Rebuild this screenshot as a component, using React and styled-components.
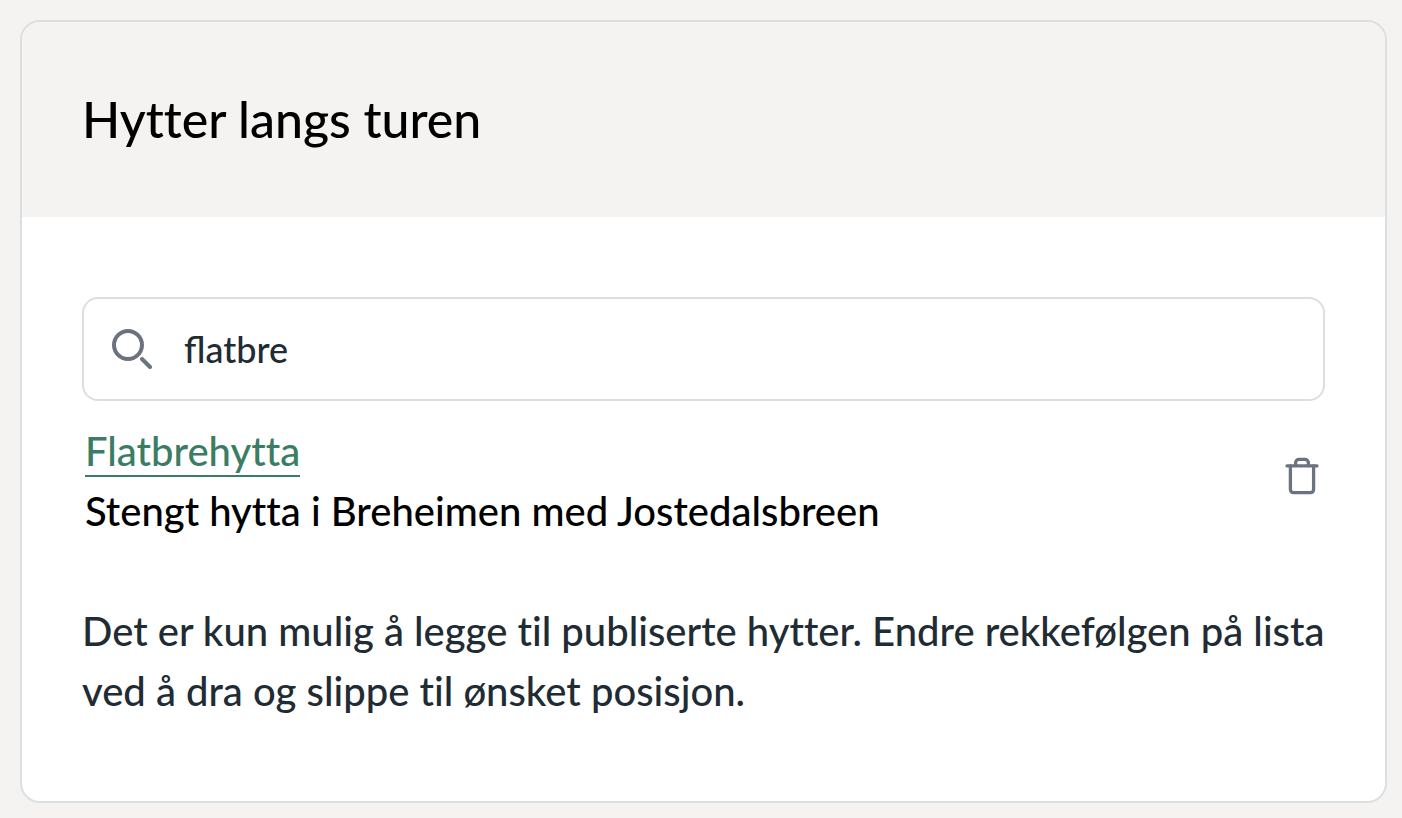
import React, { useState } from "react";
import styled, { createGlobalStyle } from "styled-components";

const GlobalStyle = createGlobalStyle`
  *, *::before, *::after { box-sizing: border-box; }
  body {
    margin: 0;
    background: #f4f3f1;
    font-family: Lato, "Liberation Sans", sans-serif;
    font-size: 40px;
    line-height: 60px;
    font-weight: 500;
    font-variant-ligatures: none;
    color: #000;
  }
`;

const Card = styled.section`
  margin: 20px 15px 15px 20px;
  border: 2px solid #dcdfe1;
  border-radius: 20px;
  background: #fff;
  overflow: hidden;
`;

const CardHeader = styled.header`
  padding: 60px;
  background: #f4f3f1;
`;

const Title = styled.h2`
  margin: 0;
  font-size: 50px;
  line-height: 75px;
  font-weight: 500;
`;

const CardBody = styled.div`
  padding: 80px 60px;
`;

const SearchField = styled.label`
  display: flex;
  align-items: center;
  gap: 32px;
  height: 104px;
  padding: 0 28px;
  border: 2px solid #dedede;
  border-radius: 16px;
  color: #6b7280;
`;

const SearchInput = styled.input`
  flex: 1;
  min-width: 0;
  padding: 0;
  border: 0;
  outline: 0;
  background: transparent;
  font: inherit;
  font-size: 36px;
  line-height: 54px;
  font-variant-ligatures: common-ligatures;
  color: #212b34;
`;

const CabinList = styled.ul`
  margin: 20px 0 60px;
  padding: 0 3px;
  list-style: none;
`;

const CabinItem = styled.li`
  display: flex;
  justify-content: space-between;
  align-items: center;
`;

const CabinText = styled.div`
  min-width: 0;
`;

const CabinLink = styled.a`
  border-bottom: 2px solid #3b7d64;
  color: #3b7d64;
  text-decoration: none;
`;

const CabinDescription = styled.p`
  margin: 0;
`;

const IconButton = styled.button`
  flex: none;
  display: flex;
  padding: 0 0 10px;
  border: 0;
  background: none;
  color: #6b7280;
  cursor: pointer;
`;

const HelpText = styled.p`
  margin: 0;
  color: #212b34;
`;

const Icon = styled.svg`
  flex: none;
  width: 40px;
  height: 40px;
  fill: none;
  stroke: currentColor;
  stroke-linecap: round;
  stroke-linejoin: round;
`;

function SearchIcon() {
  return (
    <Icon viewBox="0 0 40 40" strokeWidth="4" aria-hidden="true">
      <circle cx="16" cy="16" r="14" />
      <path d="M30 30l8 8" />
    </Icon>
  );
}

function TrashIcon() {
  return (
    <Icon viewBox="0 0 40 40" strokeWidth="3.3" aria-hidden="true">
      <path d="M5 9.9h30" />
      <path d="M13.6 9.5V6.8a3.4 3.4 0 0 1 3.4-3.4h6a3.4 3.4 0 0 1 3.4 3.4v2.7" />
      <path d="M8.4 9.9V33.6a3 3 0 0 0 3 3h17.2a3 3 0 0 0 3-3V9.9" />
    </Icon>
  );
}

export default function App() {
  const [query, setQuery] = useState("flatbre");
  return (
    <>
      <GlobalStyle />
      <Card>
        <CardHeader>
          <Title>Hytter langs turen</Title>
        </CardHeader>
        <CardBody>
          <SearchField>
            <SearchIcon />
            <SearchInput
              type="text"
              aria-label="Søk etter hytte"
              value={query}
              onChange={(e) => setQuery(e.target.value)}
            />
          </SearchField>
          <CabinList>
            <CabinItem>
              <CabinText>
                <CabinLink href="#flatbrehytta">Flatbrehytta</CabinLink>
                <CabinDescription>Stengt hytta i Breheimen med Jostedalsbreen</CabinDescription>
              </CabinText>
              <IconButton type="button" aria-label="Fjern Flatbrehytta">
                <TrashIcon />
              </IconButton>
            </CabinItem>
          </CabinList>
          <HelpText>
            Det er kun mulig å legge til publiserte hytter. Endre rekkefølgen på lista ved å dra og
            slippe til ønsket posisjon.
          </HelpText>
        </CardBody>
      </Card>
    </>
  );
}
